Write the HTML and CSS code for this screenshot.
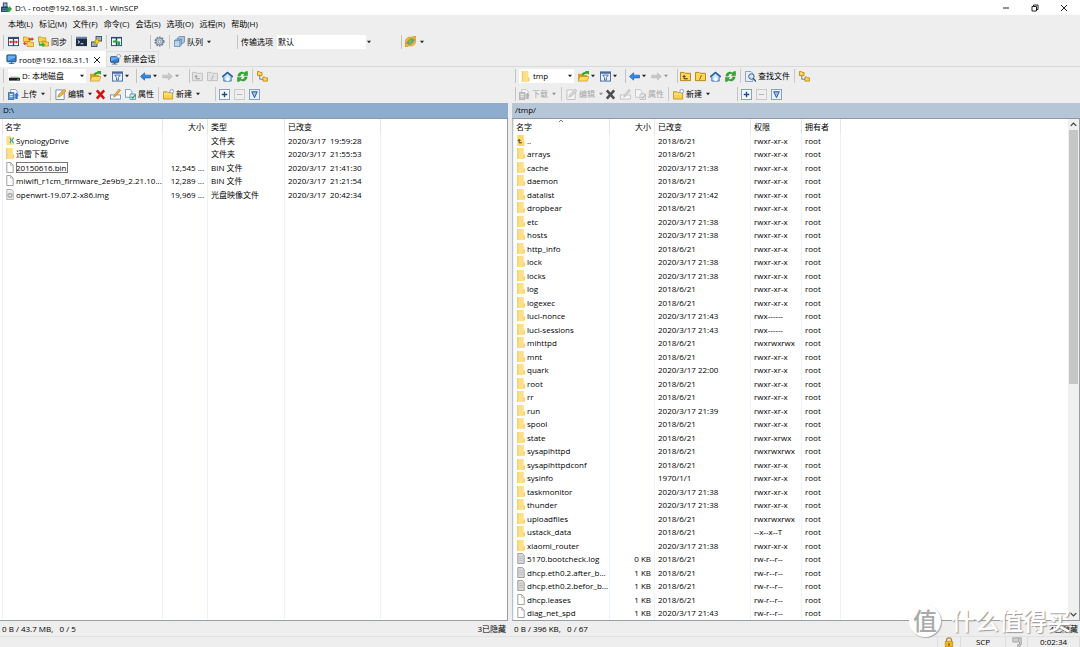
FILE: index.html
```html
<!DOCTYPE html>
<html lang="zh-CN">
<head>
<meta charset="utf-8">
<title>D:\ - root@192.168.31.1 - WinSCP</title>
<link rel="stylesheet" href="styles.css">
</head>
<body>
<svg class="defs" aria-hidden="true">
  <symbol id="app" viewBox="0 0 12 12"><rect x="2.500" y="1" width="4" height="5" fill="#8fb4dc" stroke="#345" /><rect x="0" y="5" width="8" height="6" rx="1" fill="#26415f"/><rect x="1" y="7" width="6" height="1" fill="#5d92c8"/><rect x="1" y="9" width="6" height="1" fill="#5d92c8"/><path d="M7 6h2V4l3 3.500L9 11H7z" fill="#27a536"/></symbol>
  <symbol id="compare" viewBox="0 0 12 12"><rect x=".5" y="1.5" width="11" height="9" fill="#fff" stroke="#29466f"/><path d="M6 1v10M0 2.5h12" stroke="#29466f" stroke-width="1.5"/><path d="M1 6.500l2.500-2v4zM11 6.500l-2.500-2v4z" fill="#e22"/><path d="M3 6.500h6" stroke="#e22" stroke-width="1.400"/></symbol>
  <symbol id="syncfold" viewBox="0 0 12 12"><path d="M.500 1h3l1 1h3v4h-7zM4.500 6h3l1 1h3v4.500h-7z" fill="#ffd34d" stroke="#b5830e" stroke-width=".7"/><path d="M6 2.500h3.500V1L12 3.500 9.500 5.500V4.500H6zM4 9H2.500v1.500L0 8l2.500-2v1.500H4z" fill="#e33a24"/></symbol>
  <symbol id="sync2" viewBox="0 0 12 12"><path d="M.500 1h3l1 1h4v4.500h-8zM4.500 5.500h3l1 1h3V11h-7z" fill="#ffd34d" stroke="#b5830e" stroke-width=".7"/><path d="M2 6.500v2h3V7l3 2.500L5 12v-1.500H1v-4z" fill="#38ab32"/></symbol>
  <symbol id="term" viewBox="0 0 12 12"><rect y="1" width="12" height="10" fill="#1c2c43"/><rect y="1" width="12" height="2" fill="#6486b2"/><path d="M2 5l2 1.500L2 8M5 8.500h3" stroke="#fff" fill="none"/></symbol>
  <symbol id="putty" viewBox="0 0 12 12"><rect x="5.500" y=".5" width="6" height="5" fill="#9bb5d0" stroke="#3c526e"/><rect x=".5" y="6.500" width="6" height="5" fill="#9bb5d0" stroke="#3c526e"/><path d="M9 2L2.500 6.500h3L3 11l7.500-5.500h-3z" fill="#ffd51e" stroke="#a68000" stroke-width=".5"/></symbol>
  <symbol id="keep" viewBox="0 0 12 12"><rect x=".5" y="1.500" width="11" height="9" fill="#fff" stroke="#29466f"/><path d="M0 2h12M6 2v9" stroke="#29466f" stroke-width="1.500"/><path d="M2 5h3V3.500L8 6 5 8V7H2zM10 6H7v4h3z" fill="#27a336"/></symbol>
  <symbol id="gear" viewBox="0 0 12 12"><circle cx="6" cy="6" r="4.700" fill="none" stroke="#6f7e92" stroke-width="1.600" stroke-dasharray="2 1"/><circle cx="6" cy="6" r="3.700" fill="#c6cedb" stroke="#6f7e92"/><circle cx="6" cy="6" r="1.500" fill="#eee" stroke="#6f7e92" stroke-width=".7"/></symbol>
  <symbol id="queue" viewBox="0 0 12 12"><path d="M4 2l2-1.500h5.500v6L10 8H4z" fill="#a7c4e2" stroke="#476f9c" stroke-width=".7"/><path d="M.500 5l2-1.500H8V10l-1.500 1.500h-6zM.500 5h6v6.500M6.500 5L8 3.500" fill="#bcd5ee" stroke="#476f9c" stroke-width=".7"/></symbol>
  <symbol id="globe" viewBox="0 0 12 12"><circle cx="6" cy="6" r="4.500" fill="#4f9be0"/><path d="M3 4l3-1 2 2-2 4-2-2z" fill="#73bd4c"/><path d="M0 7C0 2 5 0 8 1.500L9 0h3v4H8l1-1C6 2 3 4 2 8zM12 5c0 5-5 7-8 5.500L3 12H0V8h4L3 9c3 1 6-1 7-5z" fill="#f2b632" stroke="#a77614" stroke-width=".4"/></symbol>
  <symbol id="monitor" viewBox="0 0 12 12"><rect x="1" y="1" width="10" height="7.500" rx=".7" fill="#2f83d7" stroke="#20466f"/><path d="M2 2h8v2L2 7z" fill="#65aef0"/><path d="M5 9h2v1h2v1H3v-1h2z" fill="#52657b"/></symbol>
  <symbol id="monnew" viewBox="0 0 12 12"><rect x=".5" y="3" width="9" height="6" rx=".7" fill="#2f83d7" stroke="#20466f"/><path d="M1 3.500h7V5L1 8z" fill="#65aef0"/><path d="M4 9h2v1.500h2v1H2v-1h2z" fill="#52657b"/><circle cx="9.500" cy="2.500" r="2" fill="#fff" stroke="#628abd" stroke-width=".8"/></symbol>
  <symbol id="drive" viewBox="0 0 12 12"><path d="M2 6h8l2 2H0z" fill="#bbb"/><rect y="7.500" width="12" height="3" fill="#222"/><rect x="9" y="8.500" width="2" height="1" fill="#3d6"/></symbol>
  <symbol id="open" viewBox="0 0 12 12"><path d="M0 3h4l1 1h5v7H0z" fill="#d9a321"/><path d="M2 6h10l-2 5H0z" fill="#ffdb63" stroke="#b5830e" stroke-width=".6"/><path d="M4 4.500c0-3 3-3.500 4-3.500V0h4v4l-1.500-1C8 3 7 3 6 5z" fill="#35a92f"/></symbol>
  <symbol id="filter" viewBox="0 0 12 12"><rect x=".5" y="1" width="11" height="10" fill="#e6f0fb" stroke="#456a9b"/><path d="M0 2h12" stroke="#456a9b" stroke-width="2"/><path d="M3 4.500h6L7 7v3H5V7z" fill="#fff" stroke="#2b568f" stroke-width=".9"/></symbol>
  <symbol id="back" viewBox="0 0 12 12"><path d="M.500 6L5 2v2.500h6.500v3H5V10z" fill="#3486e8" stroke="#1959a8" stroke-width=".7"/></symbol>
  <symbol id="fwd" viewBox="0 0 12 12"><path d="M11.500 6L7 2v2.500H.500v3H7V10z" fill="#999" stroke="#777" stroke-width=".5"/></symbol>
  <symbol id="up" viewBox="0 0 12 12"><path d="M.500 1.500h4l1 1h6v8H.500z" fill="#ffd65a" stroke="#ad8018"/><path d="M4.500 5v3.500h4M3 6.500L4.500 5 6 6.500" fill="none" stroke="#222"/></symbol>
  <symbol id="rootf" viewBox="0 0 12 12"><path d="M.500 1.500h4l1 1h6v8H.500z" fill="#ffd65a" stroke="#ad8018"/><path d="M5 9.500l2-5" stroke="#8c5d00"/></symbol>
  <symbol id="home" viewBox="0 0 12 12"><path d="M2 6v5h8V6L6 2z" fill="#cfe5fb" stroke="#2a68ac"/><path d="M0 6.500l6-5 6 5" fill="none" stroke="#245b9c" stroke-width="1.500"/><rect x="5" y="7" width="2.500" height="4" fill="#fff"/></symbol>
  <symbol id="refresh" viewBox="0 0 12 12"><path d="M1 5.500C1 2 5 0 8 2l2-1.500h1.500V5H7l1.500-1.500C6 2 4 3 3.500 5.500zM11 6.500C11 10 7 12 4 10l-2 1.500H.500V7H5L3.500 8.500C6 10 8 9 8.500 6.500z" fill="#31af31" stroke="#158019" stroke-width=".5"/></symbol>
  <symbol id="tree" viewBox="0 0 12 12"><path d="M3 5v4h4" fill="none" stroke="#678"/><path d="M.500.500h2l1 1h2v3.500h-5zM6.500 6.500h2l1 1h2v3.500h-5z" fill="#ffd54f" stroke="#b5830e" stroke-width=".9"/></symbol>
  <symbol id="transfer" viewBox="0 0 12 12"><path d="M3 .500h5l2 2V9H3z" fill="#fff" stroke="#5b80ad" stroke-width=".8"/><rect x=".5" y="4" width="6" height="7.500" fill="#5d9bdc" stroke="#2a5d99" stroke-width=".8"/><path d="M2 6h3M2 8h3" stroke="#fff"/><path d="M8 11V7H6.500L9.200 4 12 7h-1.500v4z" fill="#2a74ca"/></symbol>
  <symbol id="edit" viewBox="0 0 12 12"><path d="M1 1h7l2 2v8.500H1z" fill="#fff" stroke="#4f7db2" stroke-width=".9"/><path d="M3 9l1-3 6-6 2 2-6 6z" fill="#f3b33c" stroke="#a46a1b" stroke-width=".6"/></symbol>
  <symbol id="del" viewBox="0 0 12 12"><path d="M2 1.500l8 9M10 1.500l-8 9" stroke="#d31414" stroke-width="2.800"/></symbol>
  <symbol id="rename" viewBox="0 0 12 12"><rect x=".5" y="6.500" width="11" height="4.500" fill="#fff" stroke="#5479a6" stroke-width=".8"/><path d="M4 9l1-3 5-6 1.500 1.500-5 6z" fill="#f3b33c" stroke="#a46a1b" stroke-width=".6"/></symbol>
  <symbol id="props" viewBox="0 0 12 12"><path d="M.500.500h5l2 2V9h-7z" fill="#fff" stroke="#4f7db2" stroke-width=".8"/><path d="M5.500 5.500h6v6h-6z" fill="#d7e9fb" stroke="#4f7db2" stroke-width=".8"/><path d="M7 8.500L8.500 10l3-4" fill="none" stroke="#2aa43a" stroke-width="1.300"/></symbol>
  <symbol id="newf" viewBox="0 0 12 12"><path d="M.500 3h4l1 1h5v7h-10z" fill="#ffd04b" stroke="#b5830e" stroke-width=".8"/><path d="M1 5.500h9" stroke="#fff0a8"/><circle cx="9.500" cy="2.500" r="2" fill="#fff" stroke="#5b84bb" stroke-width=".8"/></symbol>
  <symbol id="plus" viewBox="0 0 12 12"><rect x=".5" y=".5" width="11" height="11" fill="#f6faff" stroke="#7c9cc4"/><path d="M3 6h6M6 3v6" stroke="#234a85" stroke-width="1.500"/></symbol>
  <symbol id="minus" viewBox="0 0 12 12"><rect x=".5" y=".5" width="11" height="11" fill="#f2f2f2" stroke="#999"/><path d="M3 6h6" stroke="#777" stroke-width="1.200"/></symbol>
  <symbol id="vee" viewBox="0 0 12 12"><rect x=".5" y=".5" width="11" height="11" fill="#e8f1fb" stroke="#7c9cc4"/><path d="M3 3h6L6 9.500z" fill="#9dbbe0" stroke="#2d558d"/></symbol>
  <symbol id="find" viewBox="0 0 12 12"><path d="M.500.500h6l2 2v9h-8z" fill="#e8f1fb" stroke="#6688b0" stroke-width=".8"/><circle cx="7" cy="6" r="3" fill="#cfe5fa" stroke="#35506f"/><path d="M9 8l3 3.500" stroke="#35506f" stroke-width="1.500"/></symbol>
  <symbol id="d" viewBox="0 0 10 12"><path d="M1 0h7v7h1v5H1z" fill="#ffe08a"/><path d="M1 0h1v12H1zM1 11h8V7H8v4z" fill="#f1c452"/></symbol>
  <symbol id="dup" viewBox="0 0 10 12"><path d="M1 0h7v7h1v5H1z" fill="#ffd766"/><path d="M3 5v3.500h3M1.500 6.500L3 5l1.500 1.500" fill="none" stroke="#333"/></symbol>
  <symbol id="dsyn" viewBox="0 0 10 12"><path d="M1 1h4l1 1h3v9H1z" fill="#ffe08a"/><path d="M5 3l1 3-1 3M9 3L7 6l2 3" fill="none" stroke="#35a7b8" stroke-width="1.200"/></symbol>
  <symbol id="f" viewBox="0 0 10 12"><path d="M1.500.500h4l3 3v8h-7z" fill="#fff" stroke="#999"/><path d="M5.500.500v3h3" fill="none" stroke="#999" stroke-width=".7"/></symbol>
  <symbol id="t" viewBox="0 0 10 12"><path d="M1.500.500h5l2 2v9h-7z" fill="#d9d9d9" stroke="#999"/><path d="M3 4h4M3 6h4M3 8h4" stroke="#b5b5b5" stroke-width=".8"/></symbol>
  <symbol id="img" viewBox="0 0 10 12"><path d="M1.500.500h5l2 2v9h-7z" fill="#eee" stroke="#aaa"/><circle cx="5" cy="7" r="2.300" fill="#ccc" stroke="#888" stroke-width=".8"/><circle cx="5" cy="7" r=".7" fill="#fff"/></symbol>
  <symbol id="lock" viewBox="0 0 12 12"><path d="M3 6V4a3 3 0 0 1 6 0v2" fill="none" stroke="#b38b23" stroke-width="1.500"/><rect x="1.500" y="5" width="9" height="7" rx="1" fill="#f4b41f" stroke="#a97809" stroke-width=".7"/><path d="M6 7.500v3" stroke="#5d4306" stroke-width="1.300"/></symbol>
  <symbol id="press" viewBox="0 0 12 12"><path d="M1 1h7v5H1zM8 1h3v8l-2 3H7V9h2V6" fill="#d0d0d0" stroke="#999"/></symbol>
  <symbol id="arr" viewBox="0 0 5 5"><path d="M0 1h5L2.500 4z" fill="#222"/></symbol>
</svg>
<div class="window">
  <header class="titlebar">
    <svg class="ic"><use href="#app"/></svg>
    <h1>D:\ - root@192.168.31.1 - WinSCP</h1>
    <div class="winbtns">
      <button aria-label="最小化"><svg viewBox="0 0 8 8"><path d="M1 4h6" /></svg></button>
      <button aria-label="还原"><svg viewBox="0 0 8 8"><path d="M1 2.500h4.500V7H1zM2.500 2.500V1H7v4.500H5.500"/></svg></button>
      <button aria-label="关闭"><svg viewBox="0 0 8 8"><path d="M1 1l6 6M7 1L1 7"/></svg></button>
    </div>
  </header>
  <nav class="menu"><button>本地(L)</button><button>标记(M)</button><button>文件(F)</button><button>命令(C)</button><button>会话(S)</button><button>选项(O)</button><button>远程(R)</button><button>帮助(H)</button></nav>
  <div class="bar bar-main">
    <div class="group">
      <button aria-label="比较目录"><svg class="ic"><use href="#compare"/></svg></button>
      <button aria-label="同步浏览"><svg class="ic"><use href="#syncfold"/></svg></button>
      <button><svg class="ic"><use href="#sync2"/></svg>同步</button>
      <i class="sep"></i>
      <button aria-label="控制台"><svg class="ic"><use href="#term"/></svg></button>
      <button aria-label="PuTTY"><svg class="ic"><use href="#putty"/></svg></button>
      <i class="sep"></i>
      <button aria-label="保持更新"><svg class="ic"><use href="#keep"/></svg></button>
    </div>
    <div class="group tight">
      <button aria-label="设置"><svg class="ic"><use href="#gear"/></svg></button>
      <i class="sep"></i>
      <button><svg class="ic"><use href="#queue"/></svg>队列<svg class="arr wide"><use href="#arr"/></svg></button>
    </div>
    <div class="group tight">
      <label for="preset">传输选项</label>
      <span class="combo combo-preset"><select id="preset"><option>默认</option></select><span class="drop"><svg class="arr"><use href="#arr"/></svg></span></span>
    </div>
    <div class="group tight">
      <button aria-label="同步"><svg class="ic"><use href="#globe"/></svg><svg class="arr wide"><use href="#arr"/></svg></button>
    </div>
  </div>
  <div class="tabs">
    <div class="tab active"><button><svg class="ic"><use href="#monitor"/></svg>root@192.168.31.1</button><button class="x" aria-label="关闭标签"><svg viewBox="0 0 8 8"><path d="M1 1l6 6M7 1L1 7"/></svg></button></div>
    <div class="tab"><button><svg class="ic"><use href="#monnew"/></svg>新建会话</button></div>
  </div>
  <main class="panels">
    <section class="panel local">
      <div class="bar bar-nav">
        <div class="group">
          <span class="combo combo-dir"><svg class="ic"><use href="#drive"/></svg><select aria-label="驱动器"><option>D: 本地磁盘</option></select><svg class="arr"><use href="#arr"/></svg></span>
          <button aria-label="打开目录"><svg class="ic"><use href="#open"/></svg><svg class="arr"><use href="#arr"/></svg></button>
          <button aria-label="过滤"><svg class="ic"><use href="#filter"/></svg><svg class="arr"><use href="#arr"/></svg></button>
        </div>
        <div class="group tight">
          <button aria-label="后退"><svg class="ic"><use href="#back"/></svg><svg class="arr"><use href="#arr"/></svg></button>
          <button aria-label="前进" disabled><svg class="ic"><use href="#fwd"/></svg><svg class="arr"><use href="#arr"/></svg></button>
        </div>
        <div class="group flush">
          <button aria-label="上级目录" disabled><svg class="ic"><use href="#up"/></svg></button>
          <button aria-label="根目录" disabled><svg class="ic"><use href="#rootf"/></svg></button>
          <button aria-label="主目录"><svg class="ic"><use href="#home"/></svg></button>
          <button aria-label="刷新"><svg class="ic"><use href="#refresh"/></svg></button>
          <i class="sep"></i>
          <button aria-label="目录树"><svg class="ic"><use href="#tree"/></svg></button>
        </div>
      </div>
      <div class="bar bar-act">
        <div class="group">
          <button><svg class="ic"><use href="#transfer"/></svg>上传<svg class="arr wide"><use href="#arr"/></svg></button>
          <i class="sep"></i>
          <button><svg class="ic"><use href="#edit"/></svg>编辑<svg class="arr wide"><use href="#arr"/></svg></button>
        </div>
        <div class="group plain">
          <button aria-label="删除"><svg class="ic"><use href="#del"/></svg></button>
          <button aria-label="重命名"><svg class="ic"><use href="#rename"/></svg></button>
          <button><svg class="ic"><use href="#props"/></svg>属性</button>
          <i class="sep"></i>
          <button><svg class="ic"><use href="#newf"/></svg>新建<svg class="arr wide"><use href="#arr"/></svg></button>
        </div>
        <div class="group tight">
          <button aria-label="选择"><svg class="ic"><use href="#plus"/></svg></button>
          <button aria-label="取消选择" disabled><svg class="ic"><use href="#minus"/></svg></button>
          <button aria-label="反选"><svg class="ic"><use href="#vee"/></svg></button>
        </div>
      </div>
      <div class="path">D:\</div>
      <div class="list">
        <table>
          <colgroup><col class="c-edge"><col class="c-lname"><col class="c-size"><col class="c-type"><col class="c-date"><col></colgroup>
          <thead><tr><th></th><th>名字</th><th class="num">大小</th><th>类型</th><th>已改变</th><th></th></tr></thead>
          <tbody>
            <tr><td></td><td><svg class="fi"><use href="#dsyn"/></svg>SynologyDrive</td><td></td><td>文件夹</td><td>2020/3/17  19:59:28</td><td></td></tr>
            <tr><td></td><td><svg class="fi"><use href="#d"/></svg>迅雷下载</td><td></td><td>文件夹</td><td>2020/3/17  21:55:53</td><td></td></tr>
            <tr><td></td><td><svg class="fi"><use href="#f"/></svg><span class="focus">20150616.bin</span></td><td class="num">12,545 ...</td><td>BIN 文件</td><td>2020/3/17  21:41:30</td><td></td></tr>
            <tr><td></td><td><svg class="fi"><use href="#f"/></svg>miwifi_r1cm_firmware_2e9b9_2.21.10...</td><td class="num">12,289 ...</td><td>BIN 文件</td><td>2020/3/17  21:21:54</td><td></td></tr>
            <tr><td></td><td><svg class="fi"><use href="#img"/></svg>openwrt-19.07.2-x86.img</td><td class="num">19,969 ...</td><td>光盘映像文件</td><td>2020/3/17  20:42:34</td><td></td></tr>
            <tr class="fill"><td></td><td></td><td></td><td></td><td></td><td></td></tr>
          </tbody>
        </table>
      </div>
      <div class="info"><span>0 B / 43.7 MB,   0 / 5</span><span>3已隐藏</span></div>
    </section>
    <section class="panel remote">
      <div class="bar bar-nav">
        <div class="group tight">
          <span class="combo combo-dir"><svg class="ic"><use href="#d"/></svg><select aria-label="远程目录"><option>tmp</option></select><svg class="arr"><use href="#arr"/></svg></span>
          <button aria-label="打开目录"><svg class="ic"><use href="#open"/></svg><svg class="arr"><use href="#arr"/></svg></button>
          <button aria-label="过滤"><svg class="ic"><use href="#filter"/></svg><svg class="arr"><use href="#arr"/></svg></button>
        </div>
        <div class="group tight">
          <button aria-label="后退"><svg class="ic"><use href="#back"/></svg><svg class="arr"><use href="#arr"/></svg></button>
          <button aria-label="前进" disabled><svg class="ic"><use href="#fwd"/></svg><svg class="arr"><use href="#arr"/></svg></button>
        </div>
        <div class="group flush">
          <button aria-label="上级目录"><svg class="ic"><use href="#up"/></svg></button>
          <button aria-label="根目录"><svg class="ic"><use href="#rootf"/></svg></button>
          <button aria-label="主目录"><svg class="ic"><use href="#home"/></svg></button>
          <button aria-label="刷新"><svg class="ic"><use href="#refresh"/></svg></button>
          <i class="sep"></i>
          <button><svg class="ic"><use href="#find"/></svg>查找文件</button>
          <i class="sep"></i>
          <button aria-label="目录树"><svg class="ic"><use href="#tree"/></svg></button>
        </div>
      </div>
      <div class="bar bar-act">
        <div class="group tight">
          <button disabled><svg class="ic"><use href="#transfer"/></svg>下载<svg class="arr wide"><use href="#arr"/></svg></button>
          <i class="sep"></i>
          <button disabled><svg class="ic"><use href="#edit"/></svg>编辑<svg class="arr wide"><use href="#arr"/></svg></button>
        </div>
        <div class="group plain">
          <button aria-label="删除" disabled><svg class="ic dark"><use href="#del"/></svg></button>
          <button aria-label="重命名" disabled><svg class="ic"><use href="#rename"/></svg></button>
          <button disabled><svg class="ic"><use href="#props"/></svg>属性</button>
          <i class="sep"></i>
          <button><svg class="ic"><use href="#newf"/></svg>新建<svg class="arr wide"><use href="#arr"/></svg></button>
        </div>
        <div class="group tight">
          <button aria-label="选择"><svg class="ic"><use href="#plus"/></svg></button>
          <button aria-label="取消选择" disabled><svg class="ic"><use href="#minus"/></svg></button>
          <button aria-label="反选"><svg class="ic"><use href="#vee"/></svg></button>
        </div>
      </div>
      <div class="path">/tmp/</div>
      <div class="list">
        <table>
          <colgroup><col class="c-edge"><col class="c-rname"><col class="c-size"><col class="c-date"><col class="c-perm"><col class="c-owner"><col></colgroup>
          <thead><tr><th></th><th class="sorted">名字<svg class="sort" viewBox="0 0 6 4"><path d="M1 3l2-2 2 2"/></svg></th><th class="num">大小</th><th>已改变</th><th>权限</th><th>拥有者</th><th></th></tr></thead>
          <tbody>
            <tr><td></td><td><svg class="fi"><use href="#dup"/></svg>..</td><td></td><td>2018/6/21</td><td>rwxr-xr-x</td><td>root</td><td></td></tr>
            <tr><td></td><td><svg class="fi"><use href="#d"/></svg>arrays</td><td></td><td>2018/6/21</td><td>rwxr-xr-x</td><td>root</td><td></td></tr>
            <tr><td></td><td><svg class="fi"><use href="#d"/></svg>cache</td><td></td><td>2020/3/17 21:38</td><td>rwxr-xr-x</td><td>root</td><td></td></tr>
            <tr><td></td><td><svg class="fi"><use href="#d"/></svg>daemon</td><td></td><td>2018/6/21</td><td>rwxr-xr-x</td><td>root</td><td></td></tr>
            <tr><td></td><td><svg class="fi"><use href="#d"/></svg>datalist</td><td></td><td>2020/3/17 21:42</td><td>rwxr-xr-x</td><td>root</td><td></td></tr>
            <tr><td></td><td><svg class="fi"><use href="#d"/></svg>dropbear</td><td></td><td>2018/6/21</td><td>rwxr-xr-x</td><td>root</td><td></td></tr>
            <tr><td></td><td><svg class="fi"><use href="#d"/></svg>etc</td><td></td><td>2020/3/17 21:38</td><td>rwxr-xr-x</td><td>root</td><td></td></tr>
            <tr><td></td><td><svg class="fi"><use href="#d"/></svg>hosts</td><td></td><td>2020/3/17 21:38</td><td>rwxr-xr-x</td><td>root</td><td></td></tr>
            <tr><td></td><td><svg class="fi"><use href="#d"/></svg>http_info</td><td></td><td>2018/6/21</td><td>rwxr-xr-x</td><td>root</td><td></td></tr>
            <tr><td></td><td><svg class="fi"><use href="#d"/></svg>lock</td><td></td><td>2020/3/17 21:38</td><td>rwxr-xr-x</td><td>root</td><td></td></tr>
            <tr><td></td><td><svg class="fi"><use href="#d"/></svg>locks</td><td></td><td>2020/3/17 21:38</td><td>rwxr-xr-x</td><td>root</td><td></td></tr>
            <tr><td></td><td><svg class="fi"><use href="#d"/></svg>log</td><td></td><td>2018/6/21</td><td>rwxr-xr-x</td><td>root</td><td></td></tr>
            <tr><td></td><td><svg class="fi"><use href="#d"/></svg>logexec</td><td></td><td>2018/6/21</td><td>rwxr-xr-x</td><td>root</td><td></td></tr>
            <tr><td></td><td><svg class="fi"><use href="#d"/></svg>luci-nonce</td><td></td><td>2020/3/17 21:43</td><td>rwx------</td><td>root</td><td></td></tr>
            <tr><td></td><td><svg class="fi"><use href="#d"/></svg>luci-sessions</td><td></td><td>2020/3/17 21:43</td><td>rwx------</td><td>root</td><td></td></tr>
            <tr><td></td><td><svg class="fi"><use href="#d"/></svg>mihttpd</td><td></td><td>2018/6/21</td><td>rwxrwxrwx</td><td>root</td><td></td></tr>
            <tr><td></td><td><svg class="fi"><use href="#d"/></svg>mnt</td><td></td><td>2018/6/21</td><td>rwxr-xr-x</td><td>root</td><td></td></tr>
            <tr><td></td><td><svg class="fi"><use href="#d"/></svg>quark</td><td></td><td>2020/3/17 22:00</td><td>rwxr-xr-x</td><td>root</td><td></td></tr>
            <tr><td></td><td><svg class="fi"><use href="#d"/></svg>root</td><td></td><td>2018/6/21</td><td>rwxr-xr-x</td><td>root</td><td></td></tr>
            <tr><td></td><td><svg class="fi"><use href="#d"/></svg>rr</td><td></td><td>2018/6/21</td><td>rwxr-xr-x</td><td>root</td><td></td></tr>
            <tr><td></td><td><svg class="fi"><use href="#d"/></svg>run</td><td></td><td>2020/3/17 21:39</td><td>rwxr-xr-x</td><td>root</td><td></td></tr>
            <tr><td></td><td><svg class="fi"><use href="#d"/></svg>spool</td><td></td><td>2018/6/21</td><td>rwxr-xr-x</td><td>root</td><td></td></tr>
            <tr><td></td><td><svg class="fi"><use href="#d"/></svg>state</td><td></td><td>2018/6/21</td><td>rwxr-xrwx</td><td>root</td><td></td></tr>
            <tr><td></td><td><svg class="fi"><use href="#d"/></svg>sysapihttpd</td><td></td><td>2018/6/21</td><td>rwxrwxrwx</td><td>root</td><td></td></tr>
            <tr><td></td><td><svg class="fi"><use href="#d"/></svg>sysapihttpdconf</td><td></td><td>2018/6/21</td><td>rwxr-xr-x</td><td>root</td><td></td></tr>
            <tr><td></td><td><svg class="fi"><use href="#d"/></svg>sysinfo</td><td></td><td>1970/1/1</td><td>rwxr-xr-x</td><td>root</td><td></td></tr>
            <tr><td></td><td><svg class="fi"><use href="#d"/></svg>taskmonitor</td><td></td><td>2020/3/17 21:38</td><td>rwxr-xr-x</td><td>root</td><td></td></tr>
            <tr><td></td><td><svg class="fi"><use href="#d"/></svg>thunder</td><td></td><td>2020/3/17 21:38</td><td>rwxr-xr-x</td><td>root</td><td></td></tr>
            <tr><td></td><td><svg class="fi"><use href="#d"/></svg>uploadfiles</td><td></td><td>2018/6/21</td><td>rwxrwxrwx</td><td>root</td><td></td></tr>
            <tr><td></td><td><svg class="fi"><use href="#d"/></svg>ustack_data</td><td></td><td>2018/6/21</td><td>--x--x--T</td><td>root</td><td></td></tr>
            <tr><td></td><td><svg class="fi"><use href="#d"/></svg>xiaomi_router</td><td></td><td>2020/3/17 21:38</td><td>rwxr-xr-x</td><td>root</td><td></td></tr>
            <tr><td></td><td><svg class="fi"><use href="#t"/></svg>5170.bootcheck.log</td><td class="num">0 KB</td><td>2018/6/21</td><td>rw-r--r--</td><td>root</td><td></td></tr>
            <tr><td></td><td><svg class="fi"><use href="#t"/></svg>dhcp.eth0.2.after_b...</td><td class="num">1 KB</td><td>2018/6/21</td><td>rw-r--r--</td><td>root</td><td></td></tr>
            <tr><td></td><td><svg class="fi"><use href="#t"/></svg>dhcp.eth0.2.befor_b...</td><td class="num">1 KB</td><td>2018/6/21</td><td>rw-r--r--</td><td>root</td><td></td></tr>
            <tr><td></td><td><svg class="fi"><use href="#f"/></svg>dhcp.leases</td><td class="num">1 KB</td><td>2018/6/21</td><td>rw-r--r--</td><td>root</td><td></td></tr>
            <tr><td></td><td><svg class="fi"><use href="#f"/></svg>diag_net_spd</td><td class="num">1 KB</td><td>2020/3/17 21:43</td><td>rw-r--r--</td><td>root</td><td></td></tr>
          </tbody>
        </table>
        <div class="scroll"><svg viewBox="0 0 8 8"><path d="M2 5l2-2 2 2"/></svg><div class="track"><div class="thumb"></div></div><svg viewBox="0 0 8 8"><path d="M2 3l2 2 2-2"/></svg></div>
      </div>
      <div class="info"><span>0 B / 396 KB,   0 / 67</span><span>4已隐藏</span></div>
    </section>
  </main>
  <footer class="status"><span></span><span><svg class="ic"><use href="#lock"/></svg></span><span>SCP</span><span><svg class="ic"><use href="#press"/></svg></span><span>0:02:34</span></footer>
  <div class="mark"><span class="badge">值</span><span>什么值得买</span></div>
</div>
</body>
</html>
```
FILE: styles.css
```css
* { box-sizing: border-box; }
body {
  margin: 0;
  font: 8px/12px "Open Sans", "Noto Sans CJK SC", sans-serif;
  color: #000;
  background: #eee;
}
button, select {
  font: inherit;
  color: inherit;
  border: 0;
  padding: 0;
  margin: 0;
  background: none;
  appearance: none;
}
button { display: flex; align-items: center; gap: 2px; white-space: nowrap; }
svg { display: block; flex: none; }
.defs { position: absolute; width: 0; height: 0; }
.ic { width: 11px; height: 11px; }
.arr { width: 4px; height: 4px; margin-right: 1px; }
.arr.wide { margin-left: 2px; }

.window { position: relative; height: 100vh; display: flex; flex-direction: column; overflow: hidden; }

.titlebar { display: flex; align-items: center; gap: 3px; height: 15px; padding-left: 1px; background: #fff; }
.titlebar h1 { margin: 0; font-size: 8px; font-weight: 400; flex: 1; }
.winbtns { display: flex; gap: 21px; padding-right: 12px; }
.winbtns svg, .x svg { width: 8px; height: 8px; fill: none; stroke: #222; }

.menu { display: flex; align-items: center; gap: 6px; height: 17px; padding-left: 8px; }

.bar { display: grid; align-items: center; padding-left: 3px; }
.bar-main { height: 19px; grid-template-columns: 147px 87px 164px auto; }
.group { display: flex; align-items: center; gap: 4px; padding-left: 4px; height: 14px; border-left: 1px solid #c4c4c4; }
.group.tight { padding-left: 3px; }
.group.flush { padding-left: 2px; }
.group.plain { border-left: 0; padding-left: 0; }
.sep { width: 1px; height: 14px; background: #c9c9c9; }
button:disabled { color: #a5a5a5; }
button:disabled svg { filter: grayscale(1); opacity: .45; }
button:disabled svg.dark { opacity: .9; }

.combo { display: flex; align-items: center; height: 14px; gap: 2px; padding: 0 1px; background: #fff; }
.combo select { flex: 1; min-width: 0; }
.combo-preset { width: 96px; padding-right: 0; }
.drop { display: flex; align-items: center; height: 14px; padding: 0 1px; background: #eee; }

.tabs { display: flex; height: 16px; border-bottom: 1px solid #d9d9d9; }
.tab { display: flex; align-items: center; gap: 4px; padding: 0 3px; border: 1px solid #ddd; border-bottom: 0; }
.tab.active { padding: 0 4px 0 5px; margin-bottom: -1px; background: #fff; border-color: #fff; }

.panels { flex: 1; min-height: 0; display: grid; grid-template-columns: 127fr 142fr; gap: 4px; }
.panel { display: flex; flex-direction: column; min-width: 0; min-height: 0; }
.bar-nav, .bar-act { height: 18px; }
.local .bar-nav { grid-template-columns: 133px 53px auto; }
.local .bar-act { grid-template-columns: 92px 120px auto; }
.remote .bar-nav { grid-template-columns: 110px 52px auto; }
.remote .bar-act { grid-template-columns: 90px 132px auto; }
.local .combo-dir { width: 78px; }
.remote .combo-dir { width: 55px; }

.path { height: 16px; padding: 1px 3px; background: #8eaccd; border-bottom: 1px solid #8a97a6; }
.remote .path { background: #b6c6d7; }

.list { flex: 1; min-height: 0; display: flex; overflow: hidden; background: #fff; border-right: 1px solid #9a9fa6; border-bottom: 1px solid #9a9fa6; }
.remote .list { border-left: 1px solid #b9c1ca; }
table { flex: 1; height: 100%; min-width: 0; table-layout: fixed; border-collapse: separate; border-spacing: 0; width: 100%; }
.c-edge { width: 3px; }
.remote .c-edge { width: 1px; }
.c-lname { width: 160px; }
.c-rname { width: 96px; }
.c-size { width: 45px; }
.c-type { width: 77px; }
.c-date { width: 96px; }
.c-perm { width: 51px; }
.c-owner { width: 39px; }
th, td { padding: 0 3px; line-height: 12px; text-align: left; font-weight: 400; white-space: pre; overflow: hidden; border-right: 1px solid #eaf2fb; }
th:first-child, td:first-child { padding: 0; }
th:last-child, td:last-child { border-right: 0; }
th { height: 15px; border-color: #e6e6e6; }
tbody tr { height: 13px; }
tbody tr:nth-child(even) { height: 14px; }
tbody tr.fill { height: auto; }
td:nth-child(2), th:nth-child(2) { padding: 0 0 0 2px; }
.num { text-align: right; }
.fi { display: inline-block; width: 10px; height: 11px; margin-right: 1px; vertical-align: top; }
.focus { outline: 1px solid #777; outline-offset: -1px; padding-right: 1px; }
.sorted { position: relative; }
.sort { position: absolute; top: 0; left: 44px; width: 6px; height: 4px; fill: none; stroke: #777; }

.scroll { display: flex; flex-direction: column; width: 11px; background: #f0f0f0; }
.scroll svg { width: 11px; height: 11px; fill: none; stroke: #444; }
.track { flex: 1; }
.thumb { height: 53%; margin: 0 1px; background: #c6c6c6; }

.info { display: flex; justify-content: space-between; height: 15px; padding: 2px 2px 0; white-space: pre; }
.status { display: grid; grid-template-columns: 1fr 23px 45px 22px 52px; height: 11px; line-height: 10px; border-top: 1px solid #e2e2e2; }
.status span { display: flex; justify-content: center; align-items: center; border-right: 1px solid #ddd; }
.status .ic { width: 10px; height: 10px; }

.mark { position: absolute; right: 9px; bottom: 10px; display: flex; align-items: center; gap: 10px; font-size: 24px; font-weight: 500; line-height: 32px; color: #fff; text-shadow: 1px 1px 1px #999; }
.badge { width: 32px; height: 32px; border-radius: 50%; text-align: center; background: #fff; color: #aaa; text-shadow: none; box-shadow: 1px 1px 1px #aaa; }
```
